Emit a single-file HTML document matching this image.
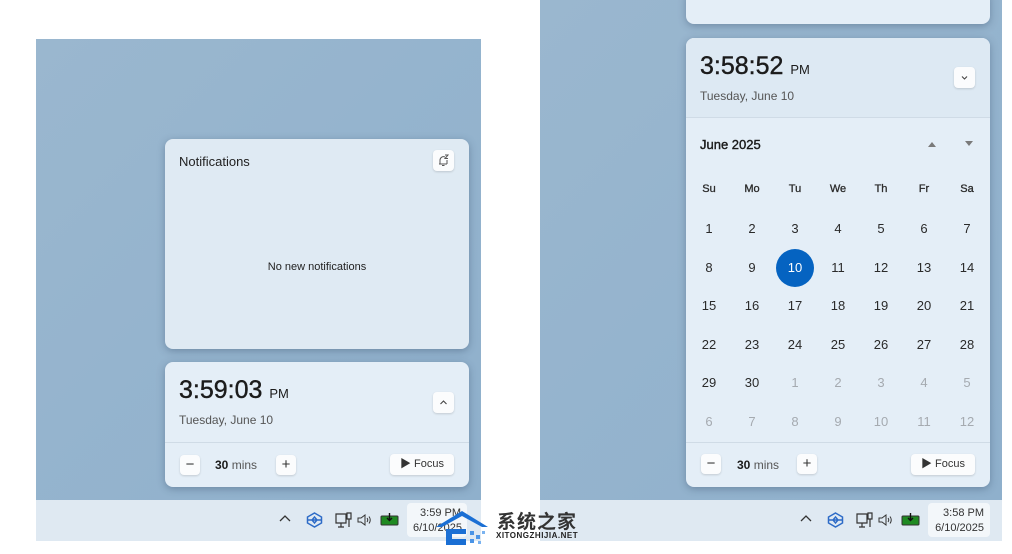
<!DOCTYPE html>
<html><head><meta charset="utf-8"><style>
*{margin:0;padding:0;box-sizing:border-box}
body{width:1012px;height:554px;background:#fff;position:relative;overflow:hidden;font-family:"Liberation Sans","Noto Sans CJK SC",sans-serif;color:#1b1b1b}
.a{position:absolute}
.bg{background:linear-gradient(135deg,#9ab7cf,#8fb0cc)}
.tb{background:#dfe9f2}
.card{position:absolute;background:#e4eef7;border-radius:8px;box-shadow:0 2px 8px rgba(40,60,90,.35);overflow:hidden}
.btn{position:absolute;background:#fbfcfd;border-radius:4px;box-shadow:0 1px 2px rgba(0,0,0,.15);text-align:center;color:#333}
.sep{position:absolute;left:0;right:0;height:1px;background:#cfdbe6}
.d{position:absolute;width:40px;margin-left:-20px;text-align:center;font-size:13px;color:#2a2a2a}
.g{color:#a5aab0}
.h{font-size:11px;-webkit-text-stroke:.3px #2a2a2a}
.time{font-size:25px;-webkit-text-stroke:.4px #1b1b1b;letter-spacing:0}
</style></head><body>
<div class="a bg" style="left:36px;top:39px;width:445px;height:461px"></div>
<div class="a tb" style="left:36px;top:500px;width:445px;height:41px"></div>
<div class="card" style="left:165px;top:139px;width:304px;height:210px;background:#dfeaf3">
 <div class="a" style="left:14px;top:15px;font-size:13px;color:#222">Notifications</div>
 <div class="btn" style="left:268px;top:11px;width:21px;height:21px"><svg width="21" height="21" viewBox="0 0 21 21"><path d="M7 14V10A3.5 3.5 0 0 1 12 7 M6 14H14 M9 15.5H11.5 M14 10V14 M12 5H15L12 8.5H15" fill="none" stroke="#555" stroke-width="1"/></svg></div>
 <div class="a" style="left:0;width:304px;top:122px;text-align:center;font-size:11px;color:#222">No new notifications</div>
</div>
<div class="card" style="left:165px;top:362px;width:304px;height:125px">
 <div class="a time" style="left:14px;top:14px">3:59:03 <span style="font-size:13px;-webkit-text-stroke:0">PM</span></div>
 <div class="a" style="left:14px;top:51px;font-size:12px;color:#555">Tuesday, June 10</div>
 <div class="btn" style="left:268px;top:30px;width:21px;height:21px"><svg width="21" height="21" viewBox="0 0 21 21"><path d="M7.5 12L10.5 9L13.5 12" fill="none" stroke="#444" stroke-width="1.1"/></svg></div>
 <div class="sep" style="top:80px"></div>
 <div class="btn" style="left:15px;top:93px;width:20px;height:20px;font-size:15px;line-height:19px">&minus;</div>
 <div class="a" style="left:50px;top:96px;font-size:12px"><b>30</b> <span style="color:#555">mins</span></div>
 <div class="btn" style="left:111px;top:93px;width:20px;height:20px;font-size:15px;line-height:19px">+</div>
 <div class="btn" style="left:225px;top:92px;width:64px;height:21px;font-size:11px;line-height:21px">&#9654; Focus</div>
</div>
<svg class="a" style="left:279px;top:514px" width="12" height="8" viewBox="0 0 12 8"><path d="M1 7L6 2L11 7" fill="none" stroke="#333" stroke-width="1.3"/></svg>
<svg class="a" style="left:306px;top:512px" width="17" height="16" viewBox="0 0 17 16"><path d="M8.5 1L15.5 5V11L8.5 15L1.5 11V5Z M1.5 8H15.5 M8.5 5L11 8L8.5 11L6 8Z" fill="none" stroke="#2d6bc7" stroke-width="1.5"/></svg>
<svg class="a" style="left:335px;top:512px" width="18" height="17" viewBox="0 0 18 17"><path d="M1 2H11V11H1Z M6 11V15 M3 15H9 M12 1H16V7H12Z M14 7V15" fill="none" stroke="#333" stroke-width="1.2"/></svg>
<svg class="a" style="left:357px;top:513px" width="16" height="14" viewBox="0 0 16 14"><path d="M1 5H4L8 2V12L4 9H1Z M10 5Q11.5 7 10 9 M12 3.5Q14.5 7 12 10.5" fill="none" stroke="#333" stroke-width="1"/></svg>
<svg class="a" style="left:380px;top:513px" width="20" height="13" viewBox="0 0 20 13"><rect x="1" y="3" width="17" height="9" rx="1" fill="#1f8a22" stroke="#333"/><path d="M9.5 0V7M7 5L9.5 7.5L12 5" stroke="#111" fill="none" stroke-width="1.4"/></svg>
<div class="a" style="left:407px;top:503px;width:60px;height:34px;background:#f3f7fa;border-radius:4px;font-size:11px;text-align:right;padding:3px 6px;line-height:15px;color:#333">3:59 PM<br>6/10/2025</div>
<div class="a bg" style="left:540px;top:0;width:462px;height:500px"></div>
<div class="a tb" style="left:540px;top:500px;width:462px;height:41px"></div>
<div class="card" style="left:686px;top:-10px;width:304px;height:34px"></div>
<div class="card" style="left:686px;top:38px;width:304px;height:449px">
 <div class="a" style="left:0;top:0;width:304px;height:79px;background:#dde9f3"></div>
 <div class="a time" style="left:14px;top:14px">3:58:52 <span style="font-size:13px;-webkit-text-stroke:0">PM</span></div>
 <div class="a" style="left:14px;top:51px;font-size:12px;color:#555">Tuesday, June 10</div>
 <div class="btn" style="left:268px;top:29px;width:21px;height:21px"><svg width="21" height="21" viewBox="0 0 21 21"><path d="M8 9.5L10.5 12L13 9.5" fill="none" stroke="#444" stroke-width="1.1"/></svg></div>
 <div class="sep" style="top:79px"></div>
 <div class="a" style="left:14px;top:99px;font-size:13px;-webkit-text-stroke:.4px #1b1b1b">June 2025</div>
 <svg class="a" style="left:241px;top:102px" width="10" height="8" viewBox="0 0 10 8"><path d="M1 7L5 2L9 7Z" fill="#7a7a7a"/></svg>
 <svg class="a" style="left:278px;top:102px" width="10" height="8" viewBox="0 0 10 8"><path d="M1 1L5 6L9 1Z" fill="#7a7a7a"/></svg>
 <div class="sep" style="top:404px"></div>
 <div class="btn" style="left:15px;top:416px;width:20px;height:20px;font-size:15px;line-height:19px">&minus;</div>
 <div class="a" style="left:51px;top:420px;font-size:12px"><b>30</b> <span style="color:#555">mins</span></div>
 <div class="btn" style="left:111px;top:416px;width:20px;height:20px;font-size:15px;line-height:19px">+</div>
 <div class="btn" style="left:225px;top:416px;width:64px;height:21px;font-size:11px;line-height:21px">&#9654; Focus</div>
</div>
<div class="a" style="left:776px;top:249px;width:38px;height:38px;border-radius:50%;background:#0563c1"></div>
<div class="a" style="left:0;top:0">
 <div class="d h" style="left:709px;top:183px">Su</div><div class="d h" style="left:752px;top:183px">Mo</div><div class="d h" style="left:795px;top:183px">Tu</div><div class="d h" style="left:838px;top:183px">We</div><div class="d h" style="left:881px;top:183px">Th</div><div class="d h" style="left:924px;top:183px">Fr</div><div class="d h" style="left:967px;top:183px">Sa</div>
 <div class="d" style="left:709px;top:221px">1</div><div class="d" style="left:752px;top:221px">2</div><div class="d" style="left:795px;top:221px">3</div><div class="d" style="left:838px;top:221px">4</div><div class="d" style="left:881px;top:221px">5</div><div class="d" style="left:924px;top:221px">6</div><div class="d" style="left:967px;top:221px">7</div>
 <div class="d" style="left:709px;top:260px">8</div><div class="d" style="left:752px;top:260px">9</div><div class="d" style="left:795px;top:260px;color:#fff">10</div><div class="d" style="left:838px;top:260px">11</div><div class="d" style="left:881px;top:260px">12</div><div class="d" style="left:924px;top:260px">13</div><div class="d" style="left:967px;top:260px">14</div>
 <div class="d" style="left:709px;top:298px">15</div><div class="d" style="left:752px;top:298px">16</div><div class="d" style="left:795px;top:298px">17</div><div class="d" style="left:838px;top:298px">18</div><div class="d" style="left:881px;top:298px">19</div><div class="d" style="left:924px;top:298px">20</div><div class="d" style="left:967px;top:298px">21</div>
 <div class="d" style="left:709px;top:337px">22</div><div class="d" style="left:752px;top:337px">23</div><div class="d" style="left:795px;top:337px">24</div><div class="d" style="left:838px;top:337px">25</div><div class="d" style="left:881px;top:337px">26</div><div class="d" style="left:924px;top:337px">27</div><div class="d" style="left:967px;top:337px">28</div>
 <div class="d" style="left:709px;top:375px">29</div><div class="d" style="left:752px;top:375px">30</div><div class="d g" style="left:795px;top:375px">1</div><div class="d g" style="left:838px;top:375px">2</div><div class="d g" style="left:881px;top:375px">3</div><div class="d g" style="left:924px;top:375px">4</div><div class="d g" style="left:967px;top:375px">5</div>
 <div class="d g" style="left:709px;top:414px">6</div><div class="d g" style="left:752px;top:414px">7</div><div class="d g" style="left:795px;top:414px">8</div><div class="d g" style="left:838px;top:414px">9</div><div class="d g" style="left:881px;top:414px">10</div><div class="d g" style="left:924px;top:414px">11</div><div class="d g" style="left:967px;top:414px">12</div>
</div>
<svg class="a" style="left:800px;top:514px" width="12" height="8" viewBox="0 0 12 8"><path d="M1 7L6 2L11 7" fill="none" stroke="#333" stroke-width="1.3"/></svg>
<svg class="a" style="left:827px;top:512px" width="17" height="16" viewBox="0 0 17 16"><path d="M8.5 1L15.5 5V11L8.5 15L1.5 11V5Z M1.5 8H15.5 M8.5 5L11 8L8.5 11L6 8Z" fill="none" stroke="#2d6bc7" stroke-width="1.5"/></svg>
<svg class="a" style="left:856px;top:512px" width="18" height="17" viewBox="0 0 18 17"><path d="M1 2H11V11H1Z M6 11V15 M3 15H9 M12 1H16V7H12Z M14 7V15" fill="none" stroke="#333" stroke-width="1.2"/></svg>
<svg class="a" style="left:878px;top:513px" width="16" height="14" viewBox="0 0 16 14"><path d="M1 5H4L8 2V12L4 9H1Z M10 5Q11.5 7 10 9 M12 3.5Q14.5 7 12 10.5" fill="none" stroke="#333" stroke-width="1"/></svg>
<svg class="a" style="left:901px;top:513px" width="20" height="13" viewBox="0 0 20 13"><rect x="1" y="3" width="17" height="9" rx="1" fill="#1f8a22" stroke="#333"/><path d="M9.5 0V7M7 5L9.5 7.5L12 5" stroke="#111" fill="none" stroke-width="1.4"/></svg>
<div class="a" style="left:928px;top:503px;width:62px;height:34px;background:#f3f7fa;border-radius:4px;font-size:11px;text-align:right;padding:3px 6px;line-height:15px;color:#333">3:58 PM<br>6/10/2025</div>
<svg class="a" style="left:432px;top:507px" width="62" height="42" viewBox="0 0 62 42"><path d="M4 20L30 4L56 20L50 20L30 9L10 20Z" fill="#1a6fd4"/><path d="M14 22H34V27H20V32H34V38H14Z" fill="#1a6fd4"/><rect x="38" y="24" width="4" height="4" fill="#4a94e6"/><rect x="44" y="28" width="4" height="4" fill="#4a94e6"/><rect x="50" y="24" width="3" height="3" fill="#7ab3f0"/><rect x="38" y="32" width="4" height="4" fill="#4a94e6"/><rect x="46" y="34" width="3" height="3" fill="#7ab3f0"/></svg>
<div class="a" style="left:497px;top:507px;font-size:19px;font-weight:bold;color:#333;letter-spacing:1px">系统之家</div>
<div class="a" style="left:496px;top:531px;font-size:8px;font-weight:bold;color:#222;letter-spacing:.5px">XITONGZHIJIA.NET</div>
</body></html>
